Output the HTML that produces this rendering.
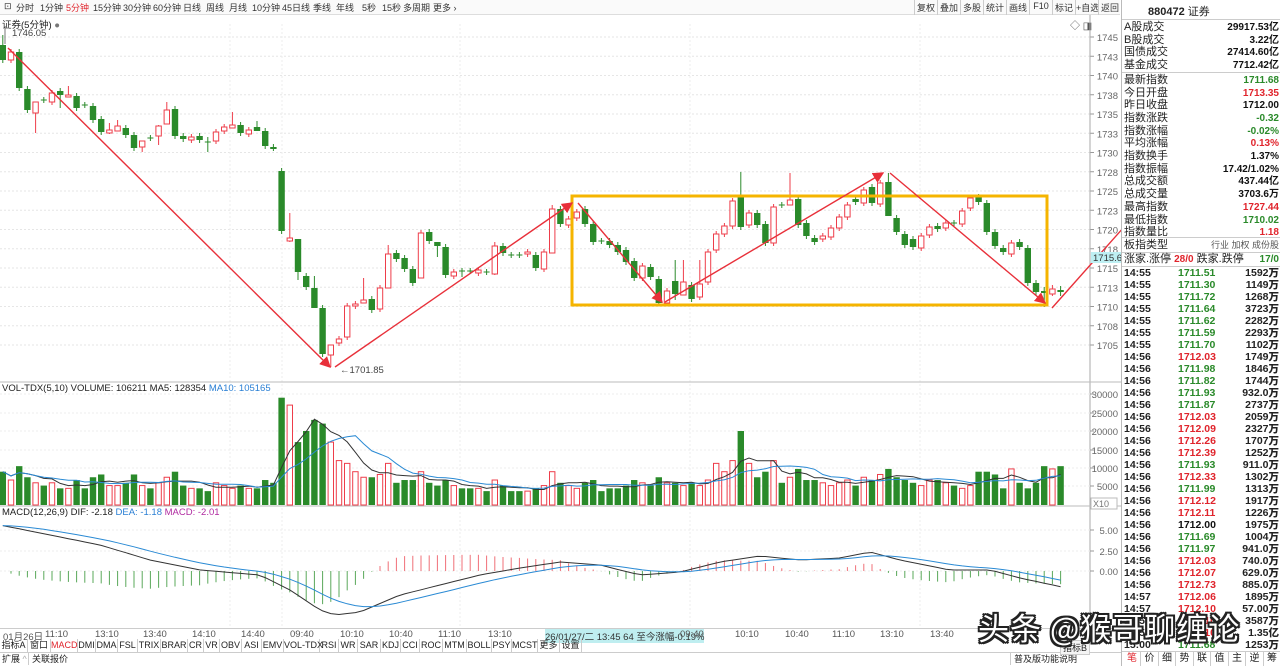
<!DOCTYPE html>
<html><head><meta charset="utf-8">
<style>
*{margin:0;padding:0;box-sizing:border-box}
body{width:1280px;height:666px;overflow:hidden;background:#fff;font-family:"Liberation Sans","Noto Sans CJK SC",sans-serif;font-size:11px;color:#222;position:relative}
.abs{position:absolute;white-space:nowrap}
#tb{position:absolute;left:0;top:0;width:1120px;height:15px;border-bottom:1px solid #ddd;background:#fafafa}
#tb span{position:absolute;top:1px;font-size:9px;color:#333;white-space:nowrap}
#rtb span{position:absolute;top:0;height:15px;width:23px;border-left:1px solid #ccc;text-align:center;padding-top:1px;font-size:9px;color:#333;white-space:nowrap}
#rp{position:absolute;left:1121px;top:0;width:159px;height:666px;border-left:1px solid #bbb;background:#fff}
.row{position:absolute;left:2px;width:155px;height:13px;font-size:11px;line-height:13px;white-space:nowrap}
.row b{font-weight:normal;position:absolute;right:0}
.g{color:#2a8a2a}.r{color:#e0242c}.k{color:#111}
.tk{position:absolute;left:2px;width:155px;height:12px;font-size:10.5px;line-height:12px;font-weight:bold}
.tk i{font-style:normal;position:absolute;left:54px}
.tk b{position:absolute;right:0}
#tabs span{position:absolute;top:639px;height:13px;border-right:1px solid #ccc;font-size:9px;line-height:13px;white-space:nowrap;text-align:center}
</style></head><body>
<div id="tb">
<span style="left:4px">⊡</span>
<span style="left:16px">分时</span><span style="left:40px">1分钟</span><span style="left:66px;color:#e0242c">5分钟</span><span style="left:93px">15分钟</span><span style="left:123px">30分钟</span><span style="left:153px">60分钟</span><span style="left:183px">日线</span><span style="left:206px">周线</span><span style="left:229px">月线</span><span style="left:252px">10分钟</span><span style="left:282px">45日线</span><span style="left:313px">季线</span><span style="left:336px">年线</span><span style="left:362px">5秒</span><span style="left:382px">15秒</span><span style="left:403px">多周期</span><span style="left:433px">更多 ›</span>
</div>
<div id="rtb" style="position:absolute;left:0;top:0">
<span style="left:914px">复权</span><span style="left:937px">叠加</span><span style="left:960px">多股</span><span style="left:983px">统计</span><span style="left:1006px">画线</span><span style="left:1029px">F10</span><span style="left:1052px">标记</span><span style="left:1075px">+自选</span><span style="left:1098px">返回</span>
</div>
<div class="abs" style="left:2px;top:17px;font-size:9.5px">证券(5分钟) <span style="color:#777">●</span></div>
<div class="abs" style="left:1070px;top:17px;font-size:10px;color:#555">◇ ◨</div>

<svg id="ch" width="1121" height="666" style="position:absolute;left:0;top:0"></svg>

<div class="abs" style="left:2px;top:383px;font-size:9.5px">VOL-TDX(5,10) VOLUME: 106211 MA5: 128354 <span style="color:#2a7fd4">MA10: 105165</span></div>
<div class="abs" style="left:2px;top:507px;font-size:9.5px">MACD(12,26,9) DIF: -2.18 <span style="color:#2a7fd4">DEA: -1.18</span> <span style="color:#b02aa0">MACD: -2.01</span></div>

<div style="position:absolute;left:0;top:628px;width:1121px;height:11px;border-top:1px solid #ccc;font-size:9.5px;color:#555">
<span class="abs" style="left:3px;top:0">01月26日</span><span class="abs" style="left:45px">11:10</span><span class="abs" style="left:95px">13:10</span><span class="abs" style="left:143px">13:40</span><span class="abs" style="left:192px">14:10</span><span class="abs" style="left:241px">14:40</span><span class="abs" style="left:290px">09:40</span><span class="abs" style="left:340px">10:10</span><span class="abs" style="left:389px">10:40</span><span class="abs" style="left:438px">11:10</span><span class="abs" style="left:488px">13:10</span><span class="abs" style="left:545px;background:#bfeef0;color:#333">26/01/27/二 13:45 64 至今涨幅-0.19%</span><span class="abs" style="left:680px">09:40</span><span class="abs" style="left:735px">10:10</span><span class="abs" style="left:785px">10:40</span><span class="abs" style="left:832px">11:10</span><span class="abs" style="left:880px">13:10</span><span class="abs" style="left:930px">13:40</span>
</div>
<div id="tabs">
<span style="left:0;width:28px">指标A</span><span style="left:28px;width:23px">窗口</span><span style="left:51px;width:27px;color:#e0242c">MACD</span><span style="left:78px;width:18px">DMI</span><span style="left:96px;width:22px">DMA</span><span style="left:118px;width:20px">FSL</span><span style="left:138px;width:23px">TRIX</span><span style="left:161px;width:27px">BRAR</span><span style="left:188px;width:16px">CR</span><span style="left:204px;width:16px">VR</span><span style="left:220px;width:22px">OBV</span><span style="left:242px;width:20px">ASI</span><span style="left:262px;width:22px">EMV</span><span style="left:284px;width:36px">VOL-TDX</span><span style="left:320px;width:19px">RSI</span><span style="left:339px;width:19px">WR</span><span style="left:358px;width:23px">SAR</span><span style="left:381px;width:20px">KDJ</span><span style="left:401px;width:19px">CCI</span><span style="left:420px;width:23px">ROC</span><span style="left:443px;width:24px">MTM</span><span style="left:467px;width:25px">BOLL</span><span style="left:492px;width:20px">PSY</span><span style="left:512px;width:26px">MCST</span><span style="left:538px;width:22px">更多</span><span style="left:560px;width:22px">设置</span>
</div>
<div style="position:absolute;left:0;top:652px;width:1121px;height:13px;border-top:1px solid #ccc;font-size:9px;line-height:12px">
<span class="abs" style="left:2px">扩展 <span style="color:#aaa">^</span></span><span class="abs" style="left:28px;border-left:1px solid #ccc;padding-left:3px">关联报价</span>
<span class="abs" style="left:1010px;border-left:1px solid #ccc;padding-left:3px">普及版功能说明</span>
</div>
<div class="abs" style="left:1060px;top:640px;font-size:9px;border:1px solid #ccc;padding:0 2px;background:#f4f4f4">指标B</div>

<div id="rp">
<div class="abs" style="left:26px;top:3px;font-size:11px;font-weight:bold;color:#222">880472 <span style="font-weight:normal">证券</span></div>
<div style="position:absolute;left:0;top:19px;width:159px;border-top:1px solid #ccc"></div>
</div>

<div class="abs" style="left:978px;top:604px;font-size:31px;font-family:'Noto Sans CJK SC',sans-serif;color:#fff;text-shadow:-2px -2px 0 #222,2px -2px 0 #222,-2px 2px 0 #222,2px 2px 0 #222,0 2px 0 #222,0 -2px 0 #222,2px 0 0 #222,-2px 0 0 #222;letter-spacing:1px">头条 @猴哥聊缠论</div>

<script>
const svg=document.getElementById('ch');
let h='';
function L(x1,y1,x2,y2,c,w,extra){h+=`<line x1="${x1}" y1="${y1}" x2="${x2}" y2="${y2}" stroke="${c}" stroke-width="${w||1}" ${extra||''}/>`}
function T(x,y,t,c,s,a){h+=`<text x="${x}" y="${y}" fill="${c||'#555'}" font-size="${s||10}" ${a||''} font-family="Liberation Sans,sans-serif">${t}</text>`}
const py=p=>37+(1745-p)*7.7;
for(let p=1705;p<=1745;p+=2.5){const y=py(p);L(0,y,1090,y,'#e6e6e6',1,'stroke-dasharray="2,2"');L(1090,y,1094,y,'#999');T(1118,y+4,Math.round(p)+'','#666',9.5,'text-anchor="end"');}
[230,282,460,690,920].forEach(x=>L(x,24,x,628,'#eee',1,'stroke-dasharray="2,2"'));
L(1090,15,1090,640,'#aaa');
L(0,382,1121,382,'#bbb');L(0,506,1121,506,'#bbb');
[[30000,394],[25000,413],[20000,431],[15000,450],[10000,468],[5000,486]].forEach(a=>{L(0,a[1],1090,a[1],'#eee',1,'stroke-dasharray="2,2"');L(1090,a[1],1094,a[1],'#999');T(1118,a[1]+4,a[0],'#666',9.5,'text-anchor="end"')});
h+='<rect x="1091" y="498" width="26" height="11" fill="#fff" stroke="#bbb"/>';T(1093,507,'X10','#777',9);
[[5,530],[2.5,551],[0,571]].forEach(a=>{L(0,a[1],1090,a[1],'#eee',1,'stroke-dasharray="2,2"');L(1090,a[1],1094,a[1],'#999');T(1118,a[1]+4,a[0].toFixed(2),'#666',9.5,'text-anchor="end"')});
const C=[[45,60,0],[60,52,1],[52,88,0],[89,110,0],[113,102,1],[100,100,2],[102,93,1],[91,95,0],[97,95,1],[96,108,0],[105,105,2],[106,120,0],[119,132,0],[133,130,1],[131,126,1],[128,135,0],[135,148,0],[147,141,1],[138,138,2],[136,126,1],[124,110,1],[109,136,0],[136,139,0],[140,137,1],[136,140,0],[142,142,2],[141,132,1],[131,127,1],[128,125,1],[125,133,0],[134,130,1],[127,131,0],[131,146,0],[147,148,0],
[171,231,0],[241,238,1],[239,272,0],[276,287,0],[288,308,0],[308,354,0],[355,345,1],[343,339,1],[337,306,1],[306,304,1],[303,300,1],[299,310,0],[309,288,1],[288,254,1],[253,259,0],[258,269,0],[269,283,0],[278,233,1],[232,241,0],[242,246,0],[247,275,0],[276,272,1],[271,271,2],[271,271,2],[273,270,1],[272,272,2],[274,246,1],[246,253,0],[255,255,2],[255,255,2],[254,252,1],[255,268,0],[269,252,1],[253,209,1],[209,224,0],[225,219,1],[218,212,1],[209,224,0],[224,242,0],[241,241,2],[241,245,0],[245,252,0],[250,262,0],[261,278,0],[278,266,1],[267,277,0],[279,303,0],[303,291,1],[281,294,0],[295,282,1],[285,299,0],[297,284,1],[282,252,1],[250,234,1],[234,226,1],[226,201,1],[197,227,0],[225,213,1],[213,225,0],[224,243,0],[243,207,1],[205,205,2],[205,200,1],[199,225,0],[223,236,0],[238,242,0],[239,236,1],[237,228,1],[228,217,1],[217,205,1],[199,202,0],[203,190,1],[187,203,0],[204,183,1],[182,216,0],[218,232,0],[234,245,0],[239,247,0],[248,236,1],[235,227,1],[226,229,0],[228,223,1],[223,223,2],[224,211,1],[208,198,1],[197,202,0],[203,232,0],[232,246,0],[248,252,0],[254,243,1],[242,247,0],[248,283,0],[283,292,0],[291,293,0],[294,289,1],[290,292,0]];
const WK={0:[35,63],4:[102,133],7:[88,108],8:[86,97],13:[123,134],14:[120,131],17:[141,152],19:[125,145],20:[102,124],25:[137,152],28:[112,128],31:[121,131],35:[213,242],36:[239,280],38:[276,308],40:[345,367],44:[278,303],47:[245,288],51:[230,278],53:[242,257],56:[268,277],60:[242,275],67:[205,253],82:[260,300],83:[260,295],85:[260,300],90:[172,230],96:[173,205],108:[173,216],127:[287,307],128:[285,296],129:[286,296]};
const G='#2a8a2a',R='#ee3d4a';
const X=i=>2.8+8.2*i;
C.forEach((c,i)=>{const x=X(i);let t=Math.min(c[0],c[1]),b=Math.max(c[0],c[1]);const w=WK[i]||[t-3,b+3];
 const col=c[2]==1?R:G;
 L(x,w[0],x,w[1],col);
 if(c[2]==2){L(x-3,t,x+3,t,col)}
 else if(c[2]==1){h+=`<rect x="${x-2.7}" y="${t}" width="5.4" height="${Math.max(b-t,1.5)}" fill="#fff" stroke="${R}" stroke-width="1"/>`}
 else{h+=`<rect x="${x-3.2}" y="${t}" width="6.4" height="${Math.max(b-t,2)}" fill="${G}"/>`}
});
let V=[12,9,14,10,8,7,8,6,6,9,6,10,11,7,7,8,11,7,6,8,10,12,7,6,6,5,8,7,6,7,6,6,9,8,
29,27,17,20,23,22,17,16,15,12,10,10,11,15,8,9,9,12,8,7,9,7,6,6,6,5,9,7,5,5,5,6,7,12,8,7,6,8,9,5,6,6,7,9,8,7,10,8,8,7,8,7,9,15,12,16,20,15,10,12,16,8,10,13,9,9,8,7,8,9,7,10,9,11,13,10,9,8,7,9,9,8,7,6,7,12,12,11,6,13,8,6,8,14,13,14,13,11];
V=V.map(v=>v>=17?v:v*0.75);
const vy=v=>505-v*3.7;
const Vn=V.slice(0,C.length);
Vn.forEach((v,i)=>{const x=X(i),up=C[i][2]==1;const y=vy(v);
 if(up)h+=`<rect x="${x-2.7}" y="${y}" width="5.4" height="${505-y}" fill="#fff" stroke="${R}"/>`;
 else h+=`<rect x="${x-3.2}" y="${y}" width="6.4" height="${505-y}" fill="${G}"/>`;});
function ma(a,n){return a.map((_,i)=>{let s=0,k=0;for(let j=Math.max(0,i-n+1);j<=i;j++){s+=a[j];k++}return s/k})}
function poly(pts,c,w){h+=`<polyline points="${pts.map(p=>p[0].toFixed(1)+','+p[1].toFixed(1)).join(' ')}" fill="none" stroke="${c}" stroke-width="${w||1}"/>`}
poly(ma(Vn,5).map((v,i)=>[X(i),vy(v)]),'#333');
poly(ma(Vn,10).map((v,i)=>[X(i),vy(v)]),'#2a8ad4');
const K=[[0,525],[50,535],[100,545],[150,560],[200,570],[260,575],[290,590],[320,610],[335,615],[360,612],[400,595],[440,585],[480,575],[520,568],[560,562],[600,565],[640,575],[680,572],[720,562],[760,556],[800,560],[840,558],[870,552],[900,560],[950,570],[990,570],[1020,578],[1062,587]];
function interp(x){for(let k=0;k<K.length-1;k++){if(x<=K[k+1][0]){const t=(x-K[k][0])/(K[k+1][0]-K[k][0]);return K[k][1]+t*(K[k+1][1]-K[k][1])}}return K[K.length-1][1]}
let dea=null;const dif=[],de=[];
C.forEach((_,i)=>{const d=(571-interp(X(i)))/8;dif.push(d);dea=dea===null?d:dea+(d-dea)*0.2;de.push(dea)});
C.forEach((_,i)=>{const m=2*(dif[i]-de[i]);const y=571-m*8;L(X(i),571,X(i),y,m>=0?'#f07078':'#5aa85a')});
poly(dif.map((d,i)=>[X(i),571-d*8]),'#333');
poly(de.map((d,i)=>[X(i),571-d*8]),'#2a8ad4');
h+='<rect x="572" y="196" width="475" height="109" fill="none" stroke="#f5b400" stroke-width="3"/>';
h+='<defs><marker id="ar" markerWidth="8" markerHeight="8" refX="7" refY="4" orient="auto"><path d="M0,0 L8,4 L0,8 z" fill="#e8303a"/></marker></defs>';
[[8,48,330,367],[335,367,572,203],[578,203,662,302],[665,302,883,173],[890,173,1045,303],[1052,308,1188,155]].forEach(a=>L(a[0],a[1],a[2],a[3],'#e8303a',1.4,'marker-end="url(#ar)"'));
L(5,28,5,44,'#777');L(5,28,9,28,'#777');T(12,36,'1746.05','#444',9.5);
T(340,373,'←1701.85','#444',9.5);
h+='<rect x="1091" y="252" width="30" height="11" fill="#bdeff2"/>';T(1093,261,'1715.6','#333',9.5);
svg.innerHTML=h;

const rp=document.getElementById('rp');let r='';
const rows=[['A股成交','29917.53亿','k'],['B股成交','3.22亿','k'],['国债成交','27414.60亿','k'],['基金成交','7712.42亿','k'],
['最新指数','1711.68','g'],['今日开盘','1713.35','r'],['昨日收盘','1712.00','k'],['指数涨跌','-0.32','g'],['指数涨幅','-0.02%','g'],['平均涨幅','0.13%','r'],['指数换手','1.37%','k'],['指数振幅','17.42/1.02%','k'],['总成交额','437.44亿','k'],['总成交量','3703.6万','k'],['最高指数','1727.44','r'],['最低指数','1710.02','g'],['指数量比','1.18','r']];
rows.forEach((a,i)=>{const y=21+i*12.7+(i>=4?2:0);r+=`<div class="row" style="top:${y}px">${a[0]}<b class="${a[2]}" style="font-weight:bold;font-size:10px">${a[1]}</b></div>`;});
r+=`<div style="position:absolute;left:0;top:72px;width:159px;border-top:1px solid #ccc"></div>`;
r+=`<div style="position:absolute;left:0;top:237px;width:159px;border-top:1px solid #ccc"></div>`;
r+=`<div class="row" style="top:239px">板指类型<b style="color:#555;font-size:9px">行业 加权 成份股</b></div>`;
r+=`<div style="position:absolute;left:0;top:252px;width:159px;border-top:1px solid #ccc"></div>`;
r+=`<div class="row" style="top:253px">涨家.涨停 <span class="r" style="font-weight:bold;font-size:10px">28/0</span> 跌家.跌停 <b class="g" style="font-weight:bold;font-size:10px">17/0</b></div>`;
r+=`<div style="position:absolute;left:0;top:266px;width:159px;border-top:1px solid #ccc"></div>`;
const tk=[['14:55','1711.51','1592万'],['14:55','1711.30','1149万'],['14:55','1711.72','1268万'],['14:55','1711.64','3723万'],['14:55','1711.62','2282万'],['14:55','1711.59','2293万'],['14:55','1711.70','1102万'],['14:56','1712.03','1749万'],['14:56','1711.98','1846万'],['14:56','1711.82','1744万'],['14:56','1711.93','932.0万'],['14:56','1711.87','2737万'],['14:56','1712.03','2059万'],['14:56','1712.09','2327万'],['14:56','1712.26','1707万'],['14:56','1712.39','1252万'],['14:56','1711.93','911.0万'],['14:56','1712.33','1302万'],['14:56','1711.99','1313万'],['14:56','1712.12','1917万'],['14:56','1712.11','1226万'],['14:56','1712.00','1975万'],['14:56','1711.69','1004万'],['14:56','1711.97','941.0万'],['14:56','1712.03','740.0万'],['14:56','1712.07','629.0万'],['14:56','1712.73','885.0万'],['14:57','1712.06','1895万'],['14:57','1712.10','57.00万'],['14:57','1712.10','3587万'],['14:57','1712.10','1.35亿'],['15:00','1711.68','1253万']];
tk.forEach((a,i)=>{const v=parseFloat(a[1]);const c=v>1712?'r':(v<1712?'g':'k');r+=`<div class="tk" style="top:${267+i*12}px">${a[0]}<i class="${c}">${a[1]}</i><b>${a[2]}</b></div>`});
r+=`<div style="position:absolute;left:0;top:651px;width:159px;height:15px;border-top:1px solid #ccc;font-size:10px;line-height:14px;background:#fff">`;
['笔','价','细','势','联','值','主','逆','筹'].forEach((s,i)=>{r+=`<span style="position:absolute;left:${i*17.5+2}px;width:17px;text-align:center;border-right:1px solid #ccc;${i==0?'color:#e0242c':''}">${s}</span>`});
r+='</div>';
rp.innerHTML+=r;
</script>
</body></html>
